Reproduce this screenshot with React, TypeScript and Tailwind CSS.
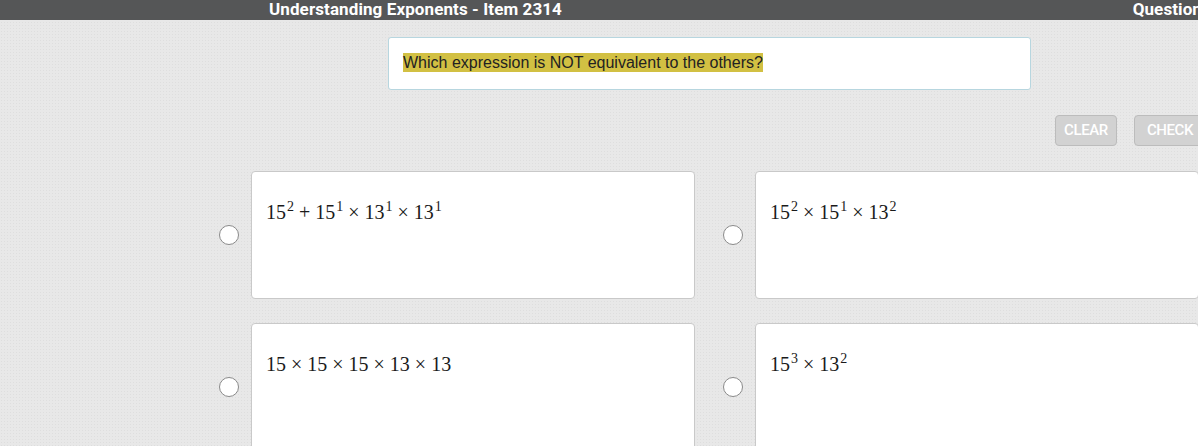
import React from "react";

type Term = { base: string; exp?: string };
type Choice = { id: string; parts: (Term | string)[] };

const choices: Choice[] = [
  { id: "a", parts: [{ base: "15", exp: "2" }, "+", { base: "15", exp: "1" }, "×", { base: "13", exp: "1" }, "×", { base: "13", exp: "1" }] },
  { id: "b", parts: [{ base: "15", exp: "2" }, "×", { base: "15", exp: "1" }, "×", { base: "13", exp: "2" }] },
  { id: "c", parts: [{ base: "15" }, "×", { base: "15" }, "×", { base: "15" }, "×", { base: "13" }, "×", { base: "13" }] },
  { id: "d", parts: [{ base: "15", exp: "3" }, "×", { base: "13", exp: "2" }] },
];

const MathExpr = ({ parts }: { parts: (Term | string)[] }) => (
  <span className="font-['Liberation_Serif','DejaVu_Serif',serif] text-[20px] text-[#1a1a1a] leading-none whitespace-nowrap">
    {parts.map((p, i) =>
      typeof p === "string" ? (
        <span key={i} className="mx-[5px]">{p}</span>
      ) : (
        <span key={i}>
          {p.base}
          {p.exp && <sup className="text-[14px] -top-[8px] ml-[1px]">{p.exp}</sup>}
        </span>
      )
    )}
  </span>
);

const Option = ({ choice }: { choice: Choice }) => (
  <div className="flex items-center gap-[12px]">
    <span className="w-[20px] h-[20px] shrink-0 rounded-full bg-white border border-[#8a8a8a]" />
    <div className="w-[444px] h-[128px] shrink-0 bg-white border border-[#c9c9c9] rounded-[4px] pl-[14px] pt-[30px]">
      <MathExpr parts={choice.parts} />
    </div>
  </div>
);

export default function App() {
  return (
    <div className="w-[1198px] h-[446px] overflow-hidden bg-[#e8e8e8] bg-[radial-gradient(#dedede_1px,transparent_1px)] bg-[size:3px_3px] font-['Liberation_Sans',Arial,sans-serif]">
      {/* top bar */}
      <header className="h-[20px] bg-[#555657] flex items-center text-white font-bold font-['Roboto',sans-serif] text-[17px] tracking-[0.1px] whitespace-nowrap">
        <span className="ml-[269px]">Understanding Exponents - Item 2314</span>
        <span className="ml-auto -mr-[4px]">Question</span>
      </header>

      {/* prompt */}
      <div className="ml-[388px] mt-[17px] w-[643px] h-[53px] bg-white border border-[#b7d6df] rounded-[3px] flex items-center px-[14px]">
        <span className="bg-[#d2c043] text-[#222] text-[16px] leading-[19px] -mt-[2px]">Which expression is NOT equivalent to the others?</span>
      </div>

      {/* actions */}
      <div className="flex justify-end gap-[17px] mt-[25px] -mr-[8px]">
        <button className="h-[31px] w-[62px] rounded-[4px] bg-[#d2d2d2] border border-[#bcbcbc] text-white text-[15px] font-medium font-['Roboto',sans-serif] tracking-[-0.4px]">CLEAR</button>
        <button className="h-[31px] w-[72px] rounded-[4px] bg-[#d2d2d2] border border-[#bcbcbc] text-white text-[15px] font-medium font-['Roboto',sans-serif] tracking-[-0.4px]">CHECK</button>
      </div>

      {/* choices */}
      <div className="ml-[219px] mt-[25px] grid grid-cols-[475px_475px] gap-x-[29px] gap-y-[24px]">
        {choices.map((c) => (
          <Option key={c.id} choice={c} />
        ))}
      </div>
    </div>
  );
}
